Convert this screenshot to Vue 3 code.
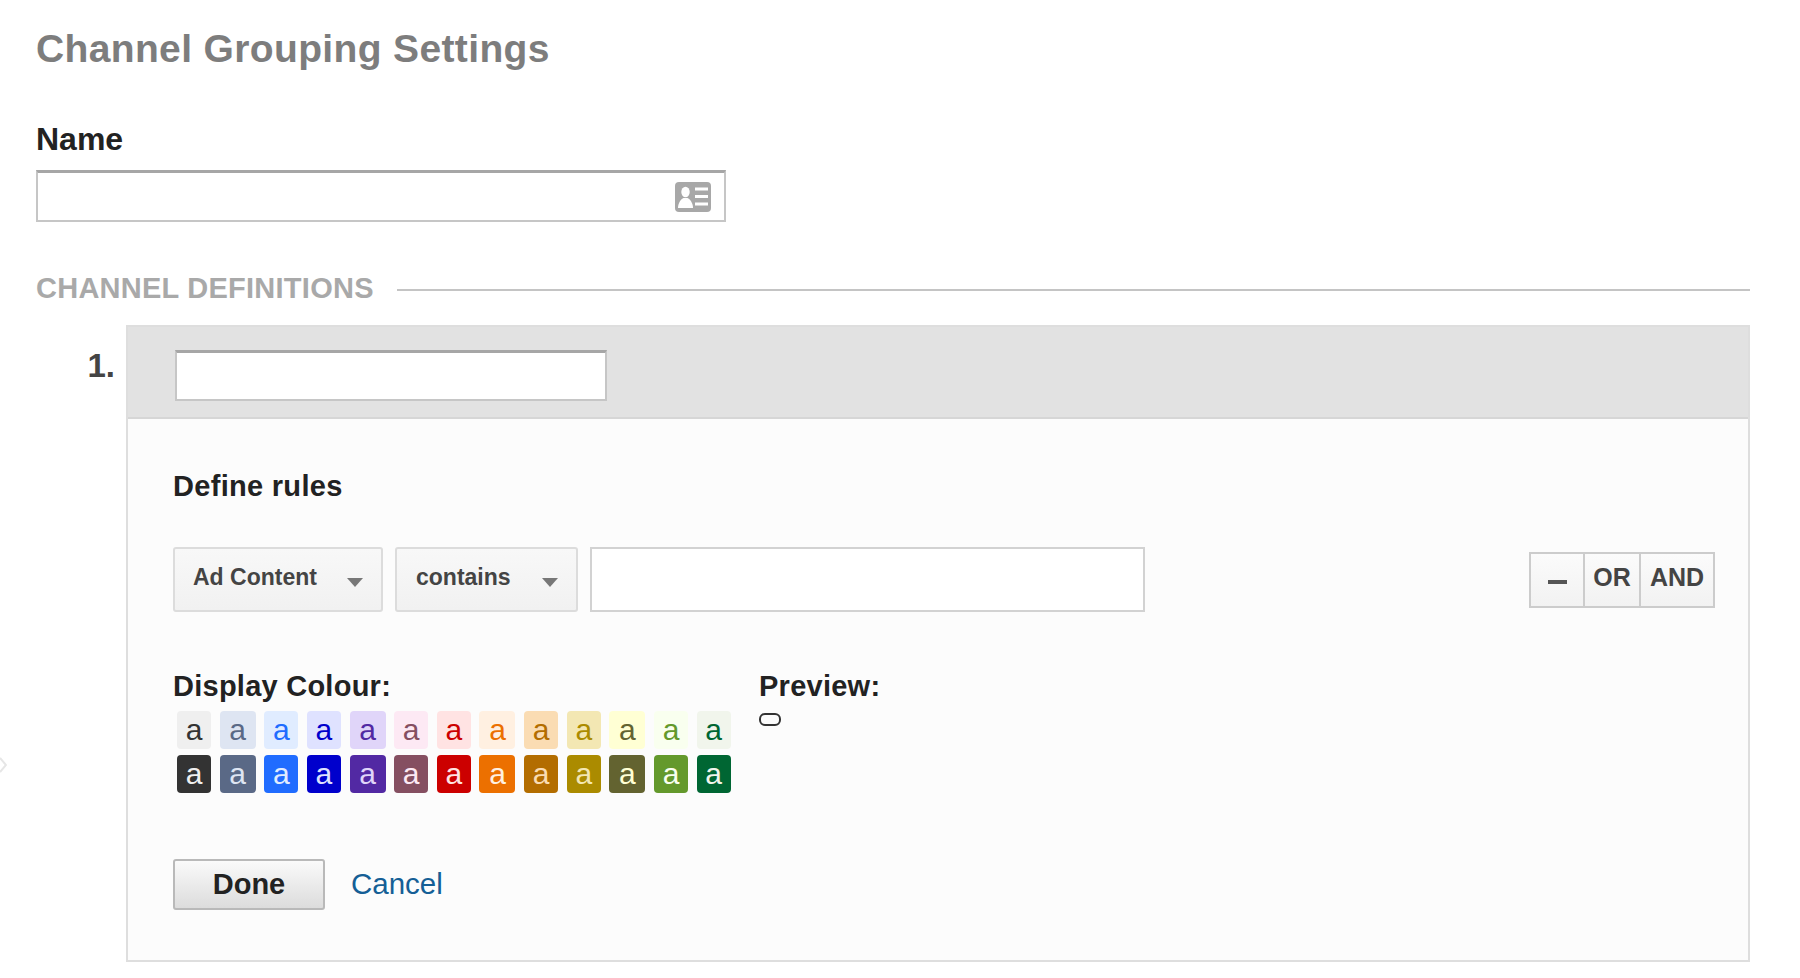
<script setup>
const palette = [
  ['#efefef', '#333333', 34], ['#dee5f2', '#5a6986', 36], ['#e0ecff', '#206cff', 34],
  ['#dfe2ff', '#0000cc', 34], ['#e0d5f9', '#5229a3', 36], ['#fde9f4', '#854f61', 34],
  ['#ffe3e3', '#cc0000', 34], ['#fff0e1', '#ec7000', 36], ['#fadcb3', '#b36d00', 34],
  ['#f3e7b3', '#ab8b00', 34], ['#ffffd4', '#636330', 36], ['#f9ffef', '#64992c', 34],
  ['#f1f5ec', '#006633', 34]
]
</script>

<template>
  <div class="page">
    <svg class="edge-chevron" width="7" height="16" viewBox="0 0 7 16">
      <path d="M0 1l6 7-6 7" fill="none" stroke="#e6e6e6" stroke-width="2" />
    </svg>
    <h1 class="title">Channel Grouping Settings</h1>
    <label class="name-label">Name</label>
    <div class="name-input">
      <svg class="card-icon" width="36" height="30" viewBox="0 0 36 30">
        <rect width="36" height="30" rx="4" fill="#a8a8a8" />
        <ellipse cx="10.500" cy="10" rx="4.200" ry="5.200" fill="#fff" />
        <path d="M3 26c0-5 3-9 5.500-10h4c2.500 1 5.500 5 5.500 10z" fill="#fff" />
        <path d="M20 7h13M20 14.500h13M20 22h13" stroke="#fff" stroke-width="3" />
      </svg>
    </div>

    <div class="section">
      <span class="section-title">CHANNEL DEFINITIONS</span>
      <span class="section-line"></span>
    </div>

    <div class="channel">
      <div class="number">1.</div>
      <div class="panel">
        <div class="panel-head">
          <div class="head-input"></div>
        </div>
        <div class="panel-body">
          <h2 class="rules-title">Define rules</h2>
          <div class="rule">
            <div class="select select-dim">
              <span>Ad Content</span><i class="caret"></i>
            </div>
            <div class="select select-op">
              <span>contains</span><i class="caret"></i>
            </div>
            <div class="value-input"></div>
            <div class="ops">
              <span class="op op-minus"><b class="minus"></b></span>
              <span class="op op-or">OR</span>
              <span class="op op-and">AND</span>
            </div>
          </div>

          <div class="colour-row">
            <div class="colours">
              <div class="field-label">Display Colour:</div>
              <div class="swatches">
                <span
                  v-for="(c, i) in palette"
                  :key="'l' + i"
                  class="swatch"
                  :style="{ background: c[0], color: c[1], width: c[2] + 'px' }"
                >a</span>
              </div>
              <div class="swatches swatches-dark">
                <span
                  v-for="(c, i) in palette"
                  :key="'d' + i"
                  class="swatch"
                  :style="{ background: c[1], color: c[0], width: c[2] + 'px' }"
                >a</span>
              </div>
            </div>
            <div class="preview">
              <div class="field-label">Preview:</div>
              <div class="pill"></div>
            </div>
          </div>

          <div class="actions">
            <button class="done">Done</button>
            <a class="cancel">Cancel</a>
          </div>
        </div>
      </div>
    </div>
  </div>
</template>

<style>
html, body { background: #fff; }
</style>

<style scoped>
.page {
  box-sizing: border-box;
  width: 1800px;
  height: 978px;
  padding: 0 50px 0 36px;
  font-family: "Liberation Sans", Arial, sans-serif;
  color: #222;
  overflow: hidden;
  position: relative;
}
.edge-chevron {
  position: absolute;
  left: 0;
  top: 757px;
}
.title {
  margin: 27px 0 0;
  font-size: 39px;
  line-height: 44px;
  letter-spacing: 0.36px;
  font-weight: 700;
  color: #7d7d7d;
}
.name-label {
  display: block;
  margin-top: 50px;
  font-size: 32px;
  line-height: 36px;
  font-weight: 700;
  color: #222;
}
.name-input {
  box-sizing: border-box;
  position: relative;
  width: 690px;
  height: 52px;
  margin-top: 13px;
  background: #fff;
  border: 2px solid #c6c6c6;
  border-top: 3px solid #a6a6a6;
}
.card-icon {
  position: absolute;
  right: 13px;
  top: 9px;
}
.section {
  display: flex;
  align-items: center;
  margin-top: 49px;
}
.section-title {
  font-size: 29px;
  line-height: 34px;
  letter-spacing: 0.25px;
  font-weight: 700;
  color: #a9a9a9;
}
.section-line {
  flex: 1;
  height: 2px;
  margin: 4px 0 0 23px;
  background: #c4c4c4;
}
.channel {
  display: flex;
  margin-top: 20px;
}
.number {
  width: 90px;
  box-sizing: border-box;
  padding: 20px 11px 0 0;
  text-align: right;
  font-size: 33px;
  line-height: 42px;
  font-weight: 700;
  color: #444;
}
.panel {
  flex: 1;
  box-sizing: border-box;
  height: 637px;
  border: 2px solid #dedede;
  background: #fcfcfc;
}
.panel-head {
  box-sizing: border-box;
  height: 92px;
  padding: 23px 0 0 47px;
  background: #e2e2e2;
  border-bottom: 2px solid #d6d6d6;
}
.head-input {
  box-sizing: border-box;
  width: 432px;
  height: 51px;
  background: #fff;
  border: 2px solid #c6c6c6;
  border-top: 3px solid #a6a6a6;
}
.panel-body {
  padding: 50px 33px 0 45px;
}
.rules-title {
  margin: 0;
  font-size: 29px;
  line-height: 34px;
  letter-spacing: 0.3px;
  font-weight: 700;
  color: #222;
}
.rule {
  display: flex;
  align-items: center;
  margin-top: 44px;
}
.select {
  box-sizing: border-box;
  display: flex;
  align-items: center;
  justify-content: space-between;
  height: 65px;
  border: 2px solid #dcdcdc;
  border-radius: 3px;
  background: linear-gradient(#f8f8f8, #f1f1f1);
  font-size: 23px;
  font-weight: 700;
  color: #444;
}
.select span { position: relative; top: -2px; }
.select-dim {
  width: 210px;
  padding: 0 18px 0 18px;
}
.select-op {
  width: 183px;
  margin-left: 12px;
  padding: 0 18px 0 19px;
}
.caret {
  width: 0;
  height: 0;
  margin-top: 6px;
  border-left: 8px solid transparent;
  border-right: 8px solid transparent;
  border-top: 9px solid #777;
}
.value-input {
  box-sizing: border-box;
  width: 555px;
  height: 65px;
  margin-left: 12px;
  background: #fff;
  border: 2px solid #d2d2d2;
}
.ops {
  display: flex;
  box-sizing: border-box;
  height: 56px;
  margin-left: auto;
  border: 2px solid #cccccc;
  background: linear-gradient(#fbfbfb, #f2f2f2);
  font-size: 25px;
  font-weight: 700;
  color: #444;
}
.op {
  box-sizing: border-box;
  display: flex;
  align-items: center;
  justify-content: center;
  padding-bottom: 4px;
}
.op-minus { width: 54px; border-right: 2px solid #cccccc; }
.op-or { width: 56px; border-right: 2px solid #cccccc; }
.op-and { width: 72px; }
.minus {
  display: block;
  width: 19px;
  height: 4px;
  margin-top: 8px;
  background: #555;
}
.colour-row {
  display: flex;
  margin-top: 57px;
}
.colours { width: 586px; }
.field-label {
  font-size: 29px;
  line-height: 34px;
  letter-spacing: 0.25px;
  font-weight: 700;
  color: #222;
}
.swatches {
  display: flex;
  gap: 8.65px;
  margin: 8px 0 0 4px;
}
.swatches-dark { margin-top: 6px; }
.swatch {
  display: flex;
  align-items: center;
  justify-content: center;
  height: 38px;
  border-radius: 4px;
  font-size: 30px;
  line-height: 38px;
}
.pill {
  box-sizing: border-box;
  width: 22px;
  height: 13px;
  margin-top: 10px;
  border: 2px solid #333;
  border-radius: 6px;
}
.actions {
  display: flex;
  align-items: center;
  margin-top: 66px;
}
.done {
  box-sizing: border-box;
  width: 152px;
  height: 51px;
  padding: 0;
  border: 2px solid #b9b9b9;
  border-radius: 3px;
  background: linear-gradient(#fafafa, #dcdcdc);
  font-family: inherit;
  font-size: 29px;
  font-weight: 700;
  color: #222;
}
.cancel {
  margin: 0 0 1px 26px;
  font-size: 29.500px;
  color: #155f96;
}
</style>
